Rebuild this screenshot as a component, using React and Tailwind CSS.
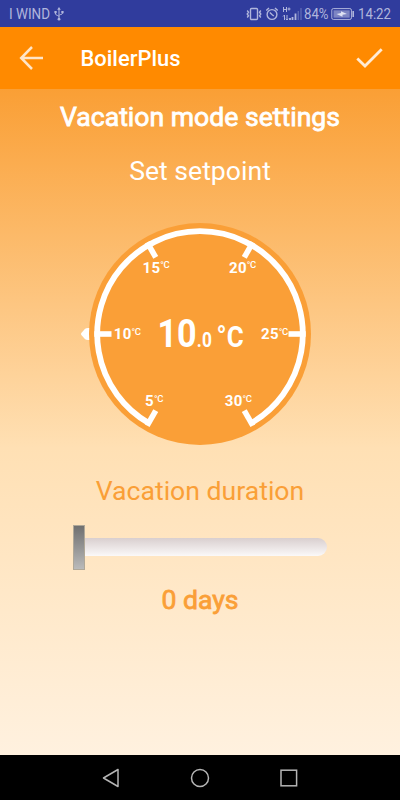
import { useState } from "react";

const CENTER = 120;

const ticks = [
  { value: 5, angle: 120, x: 65, y: 192 },
  { value: 10, angle: 180, x: 33.8, y: 125 },
  { value: 15, angle: 240, x: 62.5, y: 58.5 },
  { value: 20, angle: 300, x: 149, y: 58.5 },
  { value: 25, angle: 0, x: 181, y: 125 },
  { value: 30, angle: 60, x: 144.8, y: 192 },
];

function polar(radius, angle) {
  const rad = (angle * Math.PI) / 180;
  return [CENTER + radius * Math.cos(rad), CENTER + radius * Math.sin(rad)];
}

function StatusBar() {
  return (
    <div className="flex h-[27px] items-center justify-between bg-[#303c9d] pl-[8px] pr-[7px] pt-px text-[#b0b6dc]">
      <div className="flex items-center gap-[2px]">
        <svg width="44" height="20" className="block">
          <text x="1" y="15" fontSize="14" textLength="41" lengthAdjust="spacingAndGlyphs" fill="currentColor">
            I WIND
          </text>
        </svg>
        {/* USB */}
        <svg width="10" height="14" viewBox="0 0 10 14" fill="none" stroke="currentColor">
          <path d="M5 2v10M1.5 5v2.2c0 1 3.5 1.2 3.5 2.5M8.500 5v1.500c0 1-3.500 1-3.500 2" />
          <path d="M5 0 3.200 2.700h3.600zM.4 4h2.300v2.200H.4zM7.300 4h2.300v2.200H7.300z" fill="currentColor" stroke="none" />
          <circle cx="5" cy="12.200" r="1.400" fill="currentColor" stroke="none" />
        </svg>
      </div>
      <div className="flex items-center">
        {/* Vibrate */}
        <svg width="16" height="14" viewBox="0 0 16 14" fill="none" stroke="currentColor">
          <rect x="4.500" y="1.500" width="7" height="11" rx="1" strokeWidth="1.400" />
          <path d="M1.200 3.500 2.500 5.200 1.200 7l1.300 1.800-1.300 1.700M14.800 3.500l-1.300 1.700L14.800 7l-1.300 1.800 1.300 1.700" strokeWidth="1.400" />
        </svg>
        {/* Alarm */}
        <svg width="12" height="14" viewBox="0 0 12 14" className="ml-[4px]" fill="none" stroke="currentColor" strokeWidth="1.400">
          <circle cx="6" cy="7.500" r="4.900" />
          <path d="M.3 3.500 3 1.100M11.700 3.500 9 1.100M3.800 5.500l2.400 2.200 1.600 1.300" />
        </svg>
        {/* Signal */}
        <svg width="20" height="14" viewBox="0 0 20 14" className="ml-[4px]" fill="none" stroke="currentColor">
          <path d="M1.500 0v5M4.500 0v5M1.500 2.500h3M5.500 2h3M7 .5v3" />
          <path d="M2.500 13V8M1 9.500 2.500 8M5 8v5M3.800 11.800 5 13l1.200-1.200" />
          <path d="M8 13v-2M10.500 13v-3M13.500 13V6.500" strokeWidth="1.800" />
          <path d="M16.300 13V4M19 13V1" strokeWidth="1.400" opacity=".35" />
        </svg>
        <svg width="28" height="20" className="ml-px block">
          <text x="1" y="15" fontSize="14" textLength="24.500" lengthAdjust="spacingAndGlyphs" fill="currentColor">
            84%
          </text>
        </svg>
        {/* Battery */}
        <svg width="24" height="12" viewBox="0 0 24 12" fill="none" stroke="currentColor">
          <rect x=".8" y=".6" width="19.600" height="10.800" rx="1.500" />
          <path d="M2.500 2.300h16.200v7.400H2.500z" fill="currentColor" stroke="none" opacity=".6" />
          <path d="m5.500 6 4.500-1V3.300L16 6l-4.500.8v1.900z" fill="#dfe2f3" stroke="none" />
          <path d="M22.200 3v6" strokeWidth="1.600" />
        </svg>
        <svg width="37" height="20" className="ml-px block">
          <text x="2" y="15" fontSize="14" textLength="33" lengthAdjust="spacingAndGlyphs" fill="currentColor">
            14:22
          </text>
        </svg>
      </div>
    </div>
  );
}

function Header() {
  return (
    <header className="flex h-[62px] items-center bg-[#ff8a00] pl-[19px] pr-[17px] text-white">
      <button aria-label="Back">
        <svg width="25" height="24" viewBox="0 0 25 24" className="block" fill="none" stroke="#ffe5c8" strokeWidth="2.500">
          <path d="M13 1 2.200 12 13 23M2.200 12H24" />
        </svg>
      </button>
      <h1 className="ml-[36px] mt-[2px] flex-1">
        <svg width="110" height="30" className="block">
          <text x="0.500" y="22" fontSize="22" fontWeight="500" textLength="100" lengthAdjust="spacingAndGlyphs" fill="#fff">
            BoilerPlus
          </text>
        </svg>
      </h1>
      <button aria-label="Save">
        <svg width="27" height="20" viewBox="0 0 27 20" className="block" fill="none" stroke="#ffebd4" strokeWidth="2.800">
          <path d="m1.300 10.500 7.700 7.500L25.700 1.300" />
        </svg>
      </button>
    </header>
  );
}

function Dial() {
  const [startX, startY] = polar(102.800, 120);
  const [endX, endY] = polar(102.800, 60);

  return (
    <svg width="240" height="240" viewBox="0 0 240 240" className="block">
      <path d="M1 120c0-1 1-1.500 3-4 1.500-2 3-2 6-2v12c-3 0-4.500 0-6-2-2-2.500-3-3-3-4z" fill="#fff" />
      <circle cx="120" cy="120" r="111" fill="#fa9f37" />
      <path
        d={`M${startX} ${startY}A102.800 102.800 0 1 1 ${endX} ${endY}`}
        fill="none"
        stroke="#fff"
        strokeWidth="5.800"
      />
      {ticks.map(({ value, angle, x, y }) => {
        const [x1, y1] = polar(88.500, angle);
        const [x2, y2] = polar(105.700, angle);
        return (
          <g key={value}>
            <line x1={x1} y1={y1} x2={x2} y2={y2} stroke="#fff" strokeWidth="5.600" />
            <text x={x} y={y} fontSize="15" fontWeight="700" fill="#fff" letterSpacing="0.300">
              {value}
              <tspan dy="-4.500" fontSize="9.500" fontWeight="500" letterSpacing="-0.400">
                °C
              </tspan>
            </text>
          </g>
        );
      })}
      <text transform="translate(77.500 132.500) scale(0.865 1)" fontSize="39.500" fontWeight="700" fill="#fff">
        10
        <tspan dx="0.200" fontSize="20">.0</tspan>
        <tspan dx="5.500" fontSize="30">°C</tspan>
      </text>
    </svg>
  );
}

function NavBar() {
  return (
    <nav className="flex h-[45px] items-center justify-center gap-[69px] bg-black">
      <button aria-label="Back">
        <svg width="20" height="20" viewBox="0 0 20 20" className="block" fill="none" stroke="#b5b5b5" strokeWidth="1.500">
          <path d="M17 1.500v17L2.500 10z" strokeLinejoin="round" />
        </svg>
      </button>
      <button aria-label="Home">
        <svg width="20" height="20" viewBox="0 0 20 20" className="block" fill="none" stroke="#b5b5b5" strokeWidth="1.500">
          <circle cx="10" cy="10" r="8.500" />
        </svg>
      </button>
      <button aria-label="Recent apps">
        <svg width="20" height="20" viewBox="0 0 20 20" className="block" fill="none" stroke="#b5b5b5" strokeWidth="1.500">
          <rect x="2" y="2.200" width="15.600" height="15.600" />
        </svg>
      </button>
    </nav>
  );
}

export default function App() {
  const [days] = useState(0);

  return (
    <div className="flex h-[800px] w-[400px] flex-col overflow-hidden font-['Roboto',sans-serif]">
      <StatusBar />
      <Header />
      <main className="flex flex-1 flex-col items-center bg-[linear-gradient(to_bottom,#fa9f35_0%,#ffe0b4_54%,#fff1df_100%)]">
        <h2 className="mt-[10px] text-[26.600px] leading-9 text-white [-webkit-text-stroke:0.800px_white]">
          Vacation mode settings
        </h2>
        <p className="mt-[18px] text-[26.600px] leading-9 text-white">Set setpoint</p>
        <div className="mt-[25px]">
          <Dial />
        </div>
        <p className="mt-[19px] text-[26.600px] leading-9 text-[#fa9f37]">Vacation duration</p>
        <div className="mt-[16px] flex h-[45px] w-[254px] items-center">
          <div className="h-[45px] w-[12px] border border-[#b0a898] bg-linear-to-b from-[#707070] to-[#bababa]" />
          <div className="mb-[2px] h-[18px] flex-1 rounded-r-full bg-linear-to-b from-[#d9cfcf] to-[#fbf9f9]" />
        </div>
        <p className="mt-[12px] text-[26.600px] leading-9 text-[#fa9f37] [-webkit-text-stroke:0.800px_#fa9f37]">
          {days} days
        </p>
      </main>
      <NavBar />
    </div>
  );
}
